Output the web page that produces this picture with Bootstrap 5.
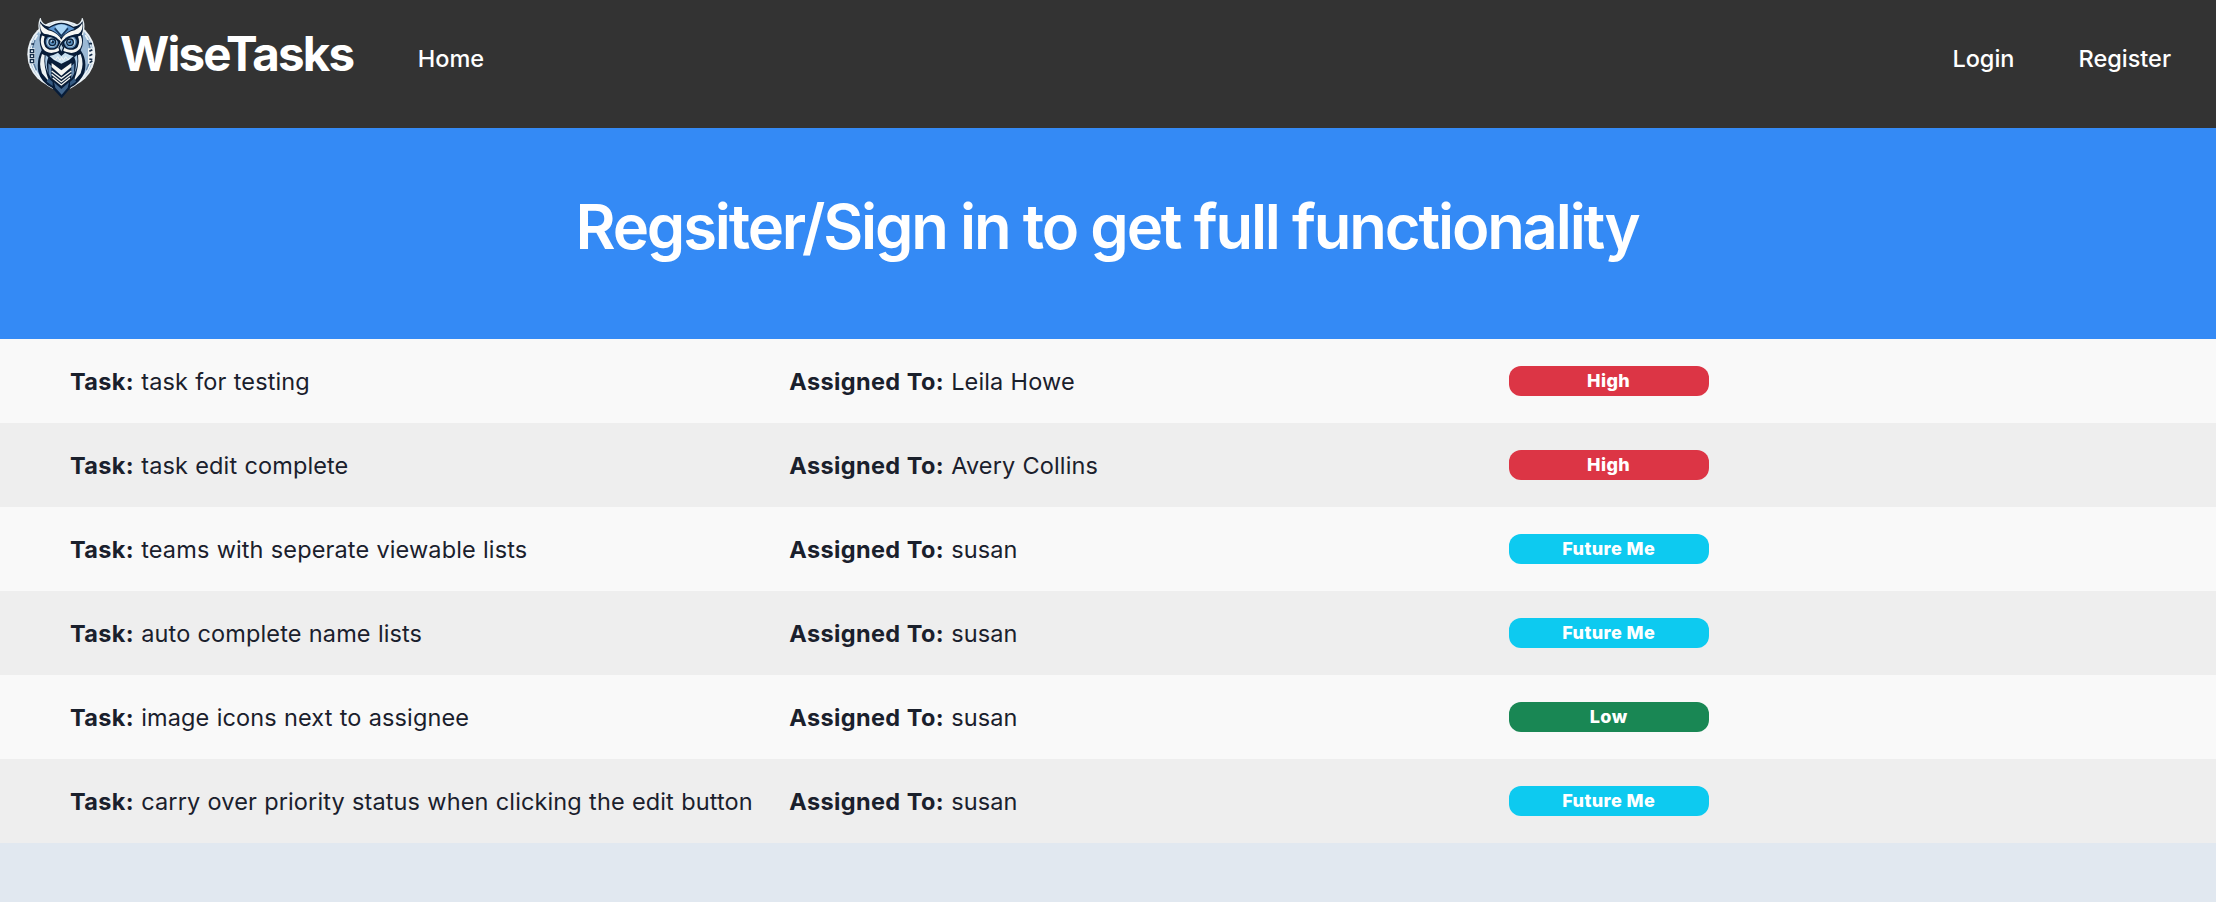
<!DOCTYPE html>
<html lang="en">
<head>
<meta charset="utf-8">
<meta name="viewport" content="width=device-width, initial-scale=1">
<title>WiseTasks</title>
<link href="https://cdn.jsdelivr.net/npm/bootstrap@5.3.0/dist/css/bootstrap.min.css" rel="stylesheet">
<style>
  body { background: #e1e8f0; color: #1a202c; font-family: Inter, "Liberation Sans", sans-serif; font-size: 24px; line-height: 36px; }
  .site-nav { background: #333; height: 128px; padding: 0 45px 0 27px; }
  .owl-logo { width: 70px; height: 81px; margin-top: 18px; }
  .brand-name { font-size: 47.5px; font-weight: 700; line-height: 58px; letter-spacing: -1.85px; color: #fff; margin: 25px 0 0 23px; }
  .site-nav .nav-link { color: #fff; font-weight: 500; font-size: 23.5px; line-height: 36px; padding: 0; margin-top: 41px; }
  .site-nav .home-link { margin-left: 64.5px; }
  .hero { background: #348af5; height: 211px; padding: 61px 2px 0 0; }
  .hero h1 { color: #fff; font-size: 61.5px; font-weight: 600; line-height: 76px; letter-spacing: -2.17px; margin: 0; }
  .task-item { height: 84px; padding: 0 36px 0 70px; background: #f9f9f9; }
  .task-item:nth-child(even) { background: #eee; }
  .task-item .row { --bs-gutter-x: 48px; height: 84px; }
  .task-text { font-size: 23.5px; white-space: nowrap; letter-spacing: .12px; word-spacing: .5px; padding-top: 2px; }
  .task-text strong { letter-spacing: .35px; }
  .task-item .badge { width: 200px; height: 30px; border-radius: 12px; padding: 0; font-size: 18px; font-weight: 800; line-height: 30px; letter-spacing: .4px; display: block; }
</style>
</head>
<body>
<nav class="site-nav d-flex align-items-start">
  <svg class="owl-logo flex-shrink-0" viewBox="81 54 210 243" role="img" aria-label="WiseTasks owl">
    <circle cx="184" cy="163" r="102" fill="#e9f0f5"/>
    <circle cx="184" cy="163" r="96" fill="#9bb9d5"/>
    <path d="M112 105Q76 160 108 215Q126 248 160 265M256 105Q292 160 260 215Q242 248 208 265" fill="none" stroke="#edf4f8" stroke-width="5"/>
    <path d="M105 120Q86 163 109 211M263 120Q282 163 259 211" fill="none" stroke="#577b9f" stroke-width="4"/>
    <path d="M86 145h18v46H86zM264 145h18v46h-18z" fill="#edf3f6"/>
    <path d="M91 149h10v9H91zM91 164h10v9H91zM91 179h10v9H91z" fill="#dce7ef" stroke="#152d4b" stroke-width="4"/>
    <path d="M268 154l9-5M268 167l9-4M268 177l9 2M269 188l8-5M267 131h9M94 132h8" stroke="#152d4b" stroke-width="5"/>
    <path d="M121 56Q124 75 148 78Q184 52 220 78Q244 75 247 56Q256 78 247 105Q253 130 242 151Q263 181 253 218Q240 248 213 262L185 295L156 263Q124 248 115 215Q109 180 125 151Q115 127 121 101Q113 76 121 56Z" fill="#071c38"/>
    <path d="M121 101Q113 76 121 57Q124 75 148 78Q184 54 220 78Q244 75 247 57Q256 78 247 105" fill="none" stroke="#e9f1f5" stroke-width="4"/>
    <path d="M144 87Q184 58 224 87Q204 91 184 112Q164 91 144 87Z" fill="#5e96cf"/>
    <path d="M165 79Q184 67 203 79L196 91L184 105L172 91Z" fill="#a8d4f5"/>
    <path d="M164 85l20 23 20-23" fill="none" stroke="#17395f" stroke-width="5"/>
    <path d="M121 69Q132 89 155 94Q174 101 184 119Q194 101 213 94Q237 89 247 69Q251 91 236 101Q207 104 184 127Q160 104 132 101Q117 91 121 69Z" fill="#f6f7f4"/>
    <path d="M130 108Q123 126 132 143Q144 159 167 152Q178 148 183 134Q188 148 201 152Q224 159 237 143Q246 126 238 108" fill="none" stroke="#f5f6f3" stroke-width="9"/>
    <circle cx="156" cy="126" r="19" fill="#5d8ab6"/><circle cx="211" cy="126" r="19" fill="#5d8ab6"/>
    <circle cx="156" cy="126" r="15" fill="#cae1ee"/><circle cx="211" cy="126" r="15" fill="#cae1ee"/>
    <circle cx="157" cy="127" r="12" fill="#0a213d"/><circle cx="210" cy="127" r="12" fill="#0a213d"/>
    <circle cx="157" cy="127" r="8" fill="#568cbc"/><circle cx="210" cy="127" r="8" fill="#568cbc"/>
    <circle cx="158" cy="126" r="4" fill="#10243e"/><circle cx="209" cy="126" r="4" fill="#10243e"/>
    <circle cx="154" cy="123" r="2" fill="#fff"/><circle cx="207" cy="123" r="2" fill="#fff"/>
    <path d="M133 106Q160 106 180 126M235 106Q208 106 188 126" fill="none" stroke="#071c38" stroke-width="6"/>
    <path d="M184 129L177 143L184 160L191 143Z" fill="#b9d1e2" stroke="#071c38" stroke-width="4"/>
    <path d="M148 168Q162 165 174 158L184 168L195 158Q207 165 221 168L207 180L184 191L162 180Z" fill="#c7dfef"/>
    <path d="M158 172l8 8 7-10 7 11 5-9 5 9 7-11 7 10 7-8" fill="none" stroke="#f6f8f6" stroke-width="3"/>
    <path d="M126 162Q115 191 126 220L148 246Q129 199 134 166ZM242 162Q253 191 242 220L220 246Q239 199 234 166Z" fill="#eef3f4"/>
    <path d="M137 165Q132 196 145 221Q136 192 145 172ZM231 165Q236 196 223 221Q232 192 223 172Z" fill="#a8c9e5"/>
    <path d="M145 190L154 198V236L146 221ZM223 190L214 198V236L222 221Z" fill="#6689ad"/>
    <path d="M145 234l13 12v12l-18-13ZM223 234l-13 12v12l18-13Z" fill="#355b83"/>
    <path d="M155 189L184 211L214 189V201L184 227L155 201Z" fill="#f4f5f2"/>
    <path d="M155 213l29 22 30-22M155 223l29 23 30-23M158 234l26 21 26-21" fill="none" stroke="#f2f4f1" stroke-width="4"/>
    <path d="M162 247L184 267L207 247L203 263L185 284L166 263Z" fill="#41658c"/>
  </svg>
  <a class="brand-name text-decoration-none" href="#">WiseTasks</a>
  <a class="nav-link home-link" href="#">Home</a>
  <div class="d-flex ms-auto gap-5">
    <a class="nav-link" href="#">Login</a>
    <a class="nav-link ms-3" href="#">Register</a>
  </div>
</nav>
<header class="hero text-center"><h1>Regsiter/Sign in to get full functionality</h1></header>
<main>
  <div class="task-item"><div class="row align-items-center"><div class="col-4 task-text"><strong>Task:</strong> task for testing</div><div class="col-4 task-text"><strong>Assigned To:</strong> Leila Howe</div><div class="col-4"><span class="badge bg-danger">High</span></div></div></div>
  <div class="task-item"><div class="row align-items-center"><div class="col-4 task-text"><strong>Task:</strong> task edit complete</div><div class="col-4 task-text"><strong>Assigned To:</strong> Avery Collins</div><div class="col-4"><span class="badge bg-danger">High</span></div></div></div>
  <div class="task-item"><div class="row align-items-center"><div class="col-4 task-text"><strong>Task:</strong> teams with seperate viewable lists</div><div class="col-4 task-text"><strong>Assigned To:</strong> susan</div><div class="col-4"><span class="badge bg-info">Future Me</span></div></div></div>
  <div class="task-item"><div class="row align-items-center"><div class="col-4 task-text"><strong>Task:</strong> auto complete name lists</div><div class="col-4 task-text"><strong>Assigned To:</strong> susan</div><div class="col-4"><span class="badge bg-info">Future Me</span></div></div></div>
  <div class="task-item"><div class="row align-items-center"><div class="col-4 task-text"><strong>Task:</strong> image icons next to assignee</div><div class="col-4 task-text"><strong>Assigned To:</strong> susan</div><div class="col-4"><span class="badge bg-success">Low</span></div></div></div>
  <div class="task-item"><div class="row align-items-center"><div class="col-4 task-text"><strong>Task:</strong> carry over priority status when clicking the edit button</div><div class="col-4 task-text"><strong>Assigned To:</strong> susan</div><div class="col-4"><span class="badge bg-info">Future Me</span></div></div></div>
</main>
<script src="https://cdn.jsdelivr.net/npm/bootstrap@5.3.0/dist/js/bootstrap.bundle.min.js"></script>
</body>
</html>
